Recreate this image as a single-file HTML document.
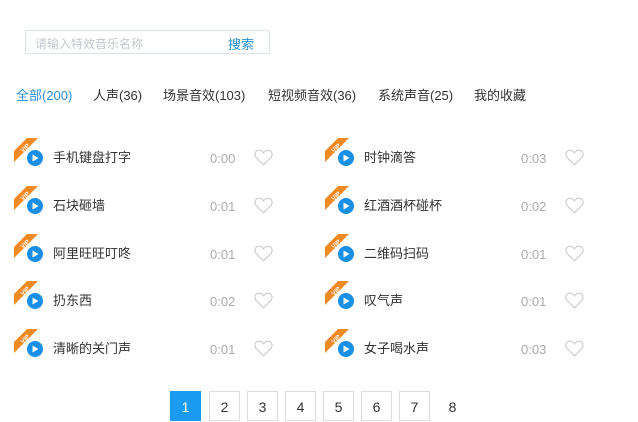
<!DOCTYPE html><html><head><meta charset="utf-8"><style>
body{margin:0;width:638px;height:418px;overflow:hidden;background:#fff;font-family:"Liberation Sans","Noto Sans CJK SC",sans-serif;color:#333;position:relative}
.a{position:absolute;white-space:nowrap}
.search{left:25px;top:30px;width:245px;height:24px;border:1px solid #dde3ea;box-sizing:border-box}
.ph{left:35px;top:35px;font-size:12px;color:#c3c8cf}
.sb{left:228px;top:34px;font-size:13px;color:#2b8fd6}
.tab{top:85px;font-size:13px;color:#333}
.name{font-size:13px;color:#333}
.time{font-size:13px;color:#aaa}
.pg{top:391px;width:31px;height:30px;border:1px solid #ddd;box-sizing:border-box;font-size:14px;text-align:center;line-height:30px;color:#333}
</style></head><body>
<div class="a search"></div>
<div class="a ph">请输入特效音乐名称</div>
<div class="a sb">搜索</div>
<div class="a tab" style="left:16px;color:#2b8fd6">全部(200)</div>
<div class="a tab" style="left:93px">人声(36)</div>
<div class="a tab" style="left:163px">场景音效(103)</div>
<div class="a tab" style="left:268px">短视频音效(36)</div>
<div class="a tab" style="left:378px">系统声音(25)</div>
<div class="a tab" style="left:474px">我的收藏</div>
<div id="rows"></div>
<div class="a pg" style="left:170px;background:#1a9af0;border-color:#1a9af0;color:#fff">1</div>
<div class="a pg" style="left:209px">2</div>
<div class="a pg" style="left:247px">3</div>
<div class="a pg" style="left:285px">4</div>
<div class="a pg" style="left:323px">5</div>
<div class="a pg" style="left:361px">6</div>
<div class="a pg" style="left:399px">7</div>
<div class="a pg" style="left:437px;border-color:transparent">8</div>
<script>
var L=[["手机键盘打字","0:00"],["石块砸墙","0:01"],["阿里旺旺叮咚","0:01"],["扔东西","0:02"],["清晰的关门声","0:01"]];
var R=[["时钟滴答","0:03"],["红酒酒杯碰杯","0:02"],["二维码扫码","0:01"],["叹气声","0:01"],["女子喝水声","0:03"]];
var h="";
function row(x,y,d){
h+='<svg class="a" style="left:'+(x)+'px;top:'+(y-20)+'px" width="34" height="30" viewBox="0 0 34 30"><polygon points="0,13 13,0 24,0 0,24" fill="#f08a24"/><text x="7" y="14" font-size="6" fill="#fff" font-weight="bold" transform="rotate(-45 9 12)" font-family="Liberation Sans">VIP</text><circle cx="21" cy="20" r="8" fill="#1a8fe8"/><polygon points="18.5,16.5 18.5,23.5 24.5,20" fill="#fff"/></svg>';
h+='<div class="a name" style="left:'+(x+39)+'px;top:'+(y-11)+'px">'+d[0]+'</div>';
h+='<div class="a time" style="left:'+(x+196)+'px;top:'+(y-7)+'px">'+d[1]+'</div>';
h+='<svg class="a" style="left:'+(x+240)+'px;top:'+(y-9)+'px" width="19" height="17" viewBox="0 0 18 16"><path d="M9 15 L2.2 8.2 C0 6 0.6 2 3.8 1.2 C6 0.7 7.8 2 9 3.6 C10.2 2 12 0.7 14.2 1.2 C17.4 2 18 6 15.8 8.2 Z" fill="none" stroke="#ccc" stroke-width="1.1"/></svg>';
}
for(var i=0;i<5;i++){var y=158+i*47.8;row(14,y,L[i]);row(325,y,R[i]);}
document.getElementById("rows").innerHTML=h;
</script>
</body></html>
